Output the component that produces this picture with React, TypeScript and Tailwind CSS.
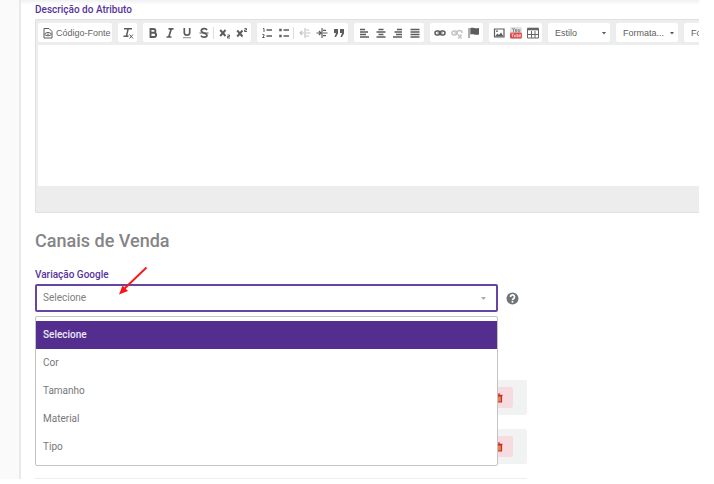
import React from "react";

type IconProps = { children: React.ReactNode; faded?: boolean };

function Icon({ children, faded }: IconProps) {
  return (
    <svg
      viewBox="0 0 12 12"
      className={faded ? "size-3 shrink-0 text-[#c4c4c4]" : "size-3 shrink-0 text-[#5c5c5c]"}
      fill="none"
      stroke="currentColor"
      strokeWidth="1.5"
      aria-hidden="true"
    >
      {children}
    </svg>
  );
}

function Tool({ label, children }: { label: string; children: React.ReactNode }) {
  return (
    <button
      type="button"
      aria-label={label}
      className="flex h-full w-[17px] shrink-0 items-center justify-center"
    >
      {children}
    </button>
  );
}

function Group({ children }: { children: React.ReactNode }) {
  return (
    <div className="flex h-[19px] shrink-0 items-center rounded-xs bg-white px-px">{children}</div>
  );
}

function Separator() {
  return <span className="mr-0.5 ml-px h-3 w-px shrink-0 bg-[#ddd]" />;
}

function ToolbarSelect({ label, text }: { label: string; text: string }) {
  return (
    <div className="relative h-[19px] w-[62px] shrink-0 rounded-xs bg-white">
      <select
        aria-label={label}
        className="h-full w-full appearance-none bg-transparent pr-3 pl-[7px] text-[9px] text-[#606060] outline-none"
      >
        <option>{text}</option>
      </select>
      <svg viewBox="0 0 4 3" className="absolute top-[9px] right-1 h-[3px] w-1" aria-hidden="true">
        <path d="M0 0h4L2 2.6z" fill="#555" />
      </svg>
    </div>
  );
}

function Toolbar() {
  return (
    <div className="flex gap-[6px] overflow-hidden py-[3px] font-['Liberation_Sans',Arial,sans-serif] text-[9px]">
      <div className="flex h-[19px] w-[74px] shrink-0 rounded-xs bg-white">
        <button type="button" className="flex w-full items-center gap-0.5 pl-1 whitespace-nowrap text-[#666]">
          <Icon>
            <path d="M2 1.500h5l3 3v6.500h-8z" strokeWidth="1" />
            <path d="M2.500 7.200C4 5 8 5 9.500 7.200 8 9.300 4 9.300 2.500 7.200z" strokeWidth="1" />
            <circle cx="6" cy="7.200" r=".8" fill="currentColor" stroke="none" />
          </Icon>
          Código-Fonte
        </button>
      </div>
      <Group>
        <Tool label="Remover formatação">
          <Icon>
            <path d="M2 1.700h8M6.200 1.700 4.500 9M1.500 9.300h5" />
            <path d="m7.500 7.500 3.500 4m0-4-3.500 4" strokeWidth="1" />
          </Icon>
        </Tool>
      </Group>
      <Group>
        <Tool label="Negrito">
          <Icon>
            <path d="M3.500 2h3a1.900 1.900 0 0 1 0 3.800h-3zm0 3.800h3.500a2.100 2.100 0 0 1 0 4.200h-3.500z" strokeWidth="1.900" />
          </Icon>
        </Tool>
        <Tool label="Itálico">
          <Icon>
            <path d="M4.500 1.800h5M2.500 10h5M7.200 2 4.800 10" strokeWidth="1.700" />
          </Icon>
        </Tool>
        <Tool label="Sublinhado">
          <Icon>
            <path d="M3.300 1v4.500a2.700 2.700 0 0 0 5.400 0V1" strokeWidth="1.700" />
            <path d="M2 10.700h8" strokeWidth="1" opacity=".7" />
          </Icon>
        </Tool>
        <Tool label="Tachado">
          <Icon>
            <path d="M9 3C8 1 3.300 1.300 3.300 3.800S9 6 9 8.200s-4.800 2.700-6 .5" strokeWidth="1.700" />
            <path d="M1.500 6h9" strokeWidth="1" />
          </Icon>
        </Tool>
        <Separator />
        <Tool label="Subscrito">
          <Icon>
            <path d="m1.200 3 5.300 6m0-6-5.300 6" strokeWidth="1.900" />
            <path d="M8.500 8h2v1.500h-2V11h2.500" strokeWidth="1" />
          </Icon>
        </Tool>
        <Tool label="Sobrescrito">
          <Icon>
            <path d="m1.200 3.500 5.300 6m0-6-5.300 6" strokeWidth="1.900" />
            <path d="M8.500 1.500h2V3h-2v1.500H11" strokeWidth="1" />
          </Icon>
        </Tool>
      </Group>
      <Group>
        <Tool label="Lista numerada">
          <Icon>
            <path d="M5.500 3H11M5.500 9H11" strokeWidth="1.700" />
            <path d="M2 1.500h1v3.500M1.500 7.500H3V9L1.500 10.500h2" strokeWidth="1" />
          </Icon>
        </Tool>
        <Tool label="Lista com marcadores">
          <Icon>
            <path d="M5.500 3H11M5.500 9H11" strokeWidth="1.700" />
            <path d="M1.200 3h2.500M1.200 9h2.500" strokeWidth="2.400" />
          </Icon>
        </Tool>
        <Separator />
        <Tool label="Diminuir recuo">
          <Icon faded>
            <path d="M6 1v10M7 3h3M7 6h4.500M7 9h3M1 6h4M3 4 1 6l2 2" strokeWidth="1.200" />
          </Icon>
        </Tool>
        <Tool label="Aumentar recuo">
          <Icon>
            <path d="M6 1v10M7 3.300h3M7 6h4.500M7 8.700h3M.500 6h4M3 4l2 2-2 2" strokeWidth="1.200" />
          </Icon>
        </Tool>
        <Tool label="Citação">
          <Icon>
            <path d="M1 2h4v4.500L3 10H1.500L3 6H1zM7 2h4v4.500L9 10H7.500L9 6H7z" fill="currentColor" stroke="none" />
          </Icon>
        </Tool>
      </Group>
      <Group>
        <Tool label="Alinhar à esquerda">
          <Icon><path d="M2 2.500h5M2 5h8M2 7.500h6M2 10h9" /></Icon>
        </Tool>
        <Tool label="Centralizar">
          <Icon><path d="M3.500 2.500h5M1.500 5h9M3.500 7.500h5M1.500 10h9" /></Icon>
        </Tool>
        <Tool label="Alinhar à direita">
          <Icon><path d="M5 2.500h5M2.500 5H10M4 7.500h6M1 10h9" /></Icon>
        </Tool>
        <Tool label="Justificar">
          <Icon><path d="M1.500 2.500h9M1.500 5h9M1.500 7.500h9M1.500 10h9" /></Icon>
        </Tool>
      </Group>
      <Group>
        <Tool label="Inserir link">
          <Icon>
            <rect x="1" y="4" width="5" height="4" rx="2" />
            <rect x="6" y="4" width="5" height="4" rx="2" />
            <path d="M3.500 6h5" strokeWidth="1.200" />
          </Icon>
        </Tool>
        <Tool label="Remover link">
          <Icon faded>
            <rect x="1" y="4" width="5" height="4" rx="2" />
            <path d="M6 6a2 2 0 0 1 5 0M3.500 6H7" />
            <path d="m7 7.500 3.500 4m0-4L7 11.500" />
          </Icon>
        </Tool>
        <Tool label="Âncora">
          <Icon>
            <path d="M1 1v10" strokeWidth="1" />
            <path d="M2.300 1c3-1 4.400 1 8.700 0v6.500c-4.300 1-5.700-1-8.700 0z" fill="currentColor" stroke="none" />
          </Icon>
        </Tool>
      </Group>
      <Group>
        <Tool label="Imagem">
          <Icon>
            <path d="M1.500 2h9.500v8H1.500z" strokeWidth="1.200" />
            <path d="m2 9.500 2.500-3L6 8l2-2.500 2.500 4zM3 3.500h2v1.300H3z" fill="currentColor" stroke="none" />
          </Icon>
        </Tool>
        <Tool label="YouTube">
          <svg viewBox="0 0 12 12" className="size-3" aria-hidden="true">
            <rect width="12" height="12" rx="1" fill="#e3e3e3" />
            <path d="m2.500 1 1 2 1-2M3.500 3v2M5.500 2.500h1.300v2H5.500zM8.300 2.200v2.500h1.500V2.200" fill="none" stroke="#777" strokeWidth=".8" />
            <rect y="5.500" width="12" height="6" rx="1.500" fill="#dc4b4b" />
            <path d="M1.500 7h2.300M2.600 7v3M4.500 7.800v2h1.300v-2M7 6.800v3h1.200v-2H7M10.800 9.700H9.500v-2h1.300v1H9.500" fill="none" stroke="#ffdede" strokeWidth=".7" />
          </svg>
        </Tool>
        <Tool label="Tabela">
          <svg viewBox="0 0 12 12" className="size-3" fill="none" stroke="#666" aria-hidden="true">
            <path d="M.500 1.500h11v9.500H.500zM4.500 4v7M8 4v7M.500 7.500h11" strokeWidth="1" />
            <path d="M.500 2h11" strokeWidth="2.600" />
          </svg>
        </Tool>
      </Group>
      <ToolbarSelect label="Estilo" text="Estilo" />
      <ToolbarSelect label="Formatação" text="Formata..." />
      <ToolbarSelect label="Fonte" text="Fonte" />
    </div>
  );
}

function VariationRow() {
  return (
    <div className="flex h-[35px] items-center justify-end rounded-xs bg-[#f1f3f3] pr-[14px]">
      <button type="button" aria-label="Excluir" className="flex h-[21px] w-7 items-center justify-center rounded-xs bg-[#f6dce1]">
        <svg viewBox="0 0 10 10" className="size-[10px]" fill="none" stroke="#c6283c" aria-hidden="true">
          <path d="M2 3h5.500v6H2z" fill="#e08a3c" strokeWidth="1.200" />
          <path d="M1 2.300h7.500M3.500 1h2.500" strokeWidth="1.200" />
        </svg>
      </button>
    </div>
  );
}

const options = ["Selecione", "Cor", "Tamanho", "Material", "Tipo"];

export default function App() {
  return (
    <div className="bg-white pr-[15px] font-[Roboto,sans-serif] text-[10px] leading-3 text-[#777]">
      <div className="flex overflow-hidden bg-linear-to-b from-[#f1f1f1] to-white to-[5px]">
        <aside className="w-[19px] shrink-0 bg-[#fafafa]" />
        <main className="min-w-0 flex-1 border-l-2 border-[#e9e9e9] pt-1 pl-[14px]">
          <label htmlFor="descricao" className="block font-medium text-[#56349a]">
            Descrição do Atributo
          </label>
          <div className="mt-[3px] rounded-l-xs border-y border-l border-[#e0e0e0] bg-[#ededed] pl-[2px]">
            <Toolbar />
            <textarea id="descricao" className="block h-[141px] w-full resize-none bg-white p-2 outline-none" />
            <div className="h-[26px]" />
          </div>

          <h2 className="mt-4 text-[18px] leading-6 font-medium text-[#858585]">Canais de Venda</h2>

          <label htmlFor="google" className="mt-4 block font-medium text-[#56349a]">
            Variação Google
          </label>
          <div className="relative mt-[3px] flex items-center gap-2">
            <div className="relative w-[463px]">
              <select
                id="google"
                className="block h-7 w-full appearance-none rounded-xs border-2 border-[#6645a5] bg-white px-[6px] text-[#808080] outline-none"
              >
                {options.map((option) => (
                  <option key={option}>{option}</option>
                ))}
              </select>
              <svg viewBox="0 0 5 3" className="absolute top-[13px] right-3 h-[3px] w-[5px]" aria-hidden="true">
                <path d="M0 0h5L2.500 3z" fill="#aaa" />
              </svg>
              <ul role="listbox" aria-label="Variação Google" className="absolute top-8 left-0 z-10 w-full rounded-xs border border-[#c4c4c4] bg-white py-1">
                {options.map((option, index) => (
                  <li
                    key={option}
                    role="option"
                    aria-selected={index === 0}
                    className={
                      index === 0
                        ? "flex h-7 items-center bg-[#532e8e] px-[7px] font-medium text-[#eee8f7]"
                        : "flex h-7 items-center px-[7px]"
                    }
                  >
                    {option}
                  </li>
                ))}
              </ul>
            </div>
            <button type="button" aria-label="Ajuda">
              <svg viewBox="0 0 13 13" className="size-[13px]" aria-hidden="true">
                <circle cx="6.500" cy="6.500" r="6" fill="#70757a" />
                <path d="M4.500 5a2 2 0 1 1 3.200 1.500c-.8.6-1.200.8-1.200 1.500" fill="none" stroke="#fff" strokeWidth="1.700" />
                <circle cx="6.500" cy="9.800" r="1" fill="#fff" />
              </svg>
            </button>
            <svg viewBox="0 0 30 30" className="pointer-events-none absolute -top-[18px] left-[83px] z-20 size-[30px]" aria-hidden="true">
              <path d="M28.500 1.500 6 23" stroke="#fb1515" strokeWidth="1.900" />
              <path d="m1 28.500 3.500-9 5.500 5.500z" fill="#fb1515" />
            </svg>
          </div>

          <section aria-label="Variações" className="mt-[68px] flex w-[492px] flex-col gap-[14px]">
            <VariationRow />
            <VariationRow />
            <hr className="border-[#eee]" />
          </section>
        </main>
      </div>
    </div>
  );
}
